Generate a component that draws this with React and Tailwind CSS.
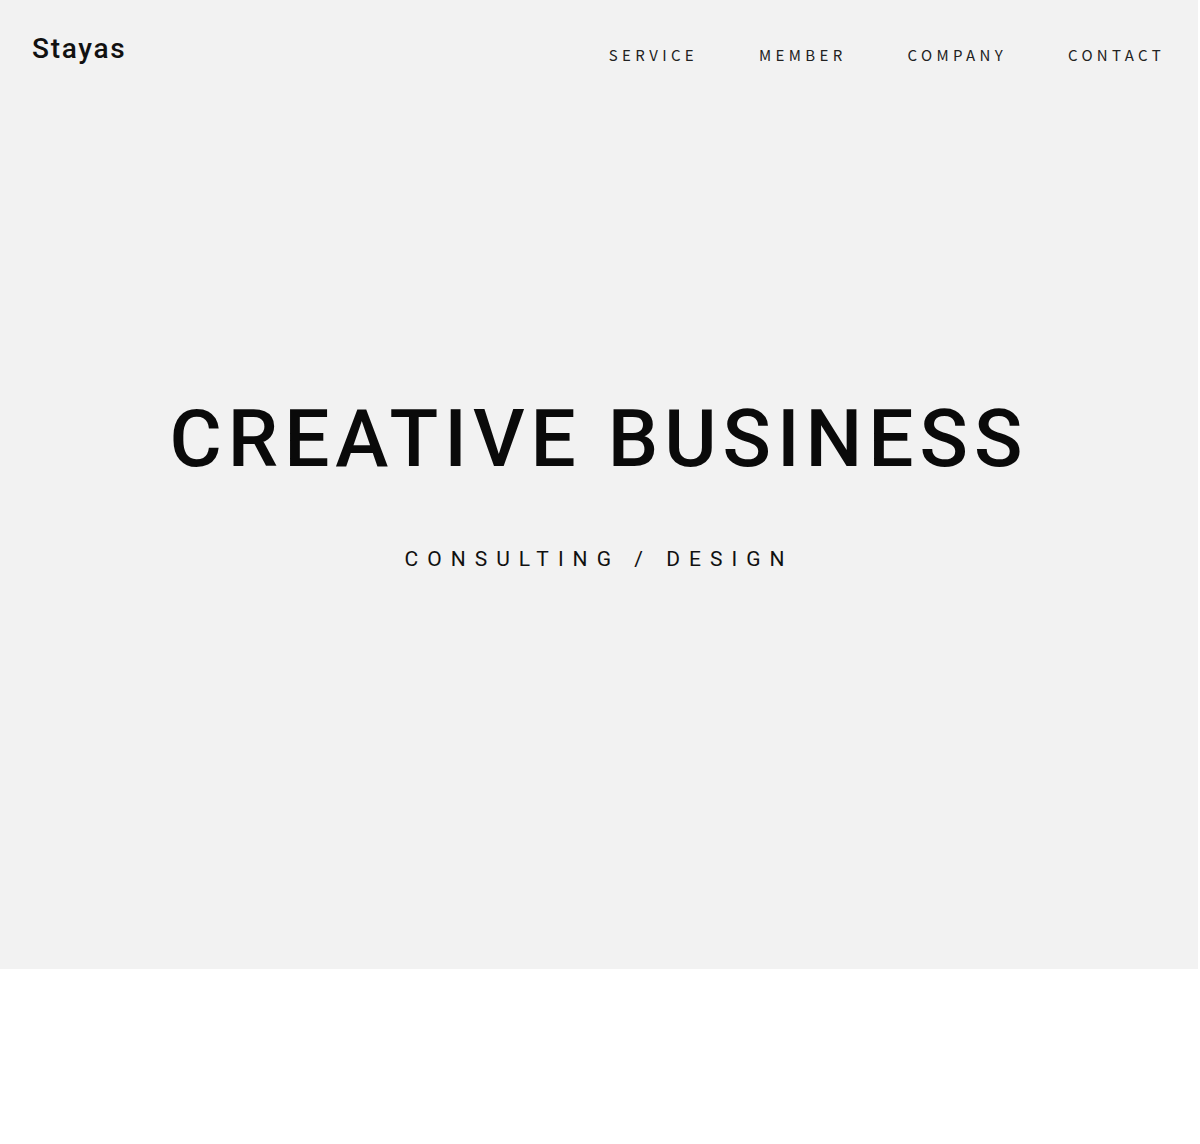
import React from 'react'

const nav = ['SERVICE', 'MEMBER', 'COMPANY', 'CONTACT']

export default function App() {
  return (
    <div className="min-h-[1144px] bg-white">
      <section className="h-[969px] w-[1198px] bg-[#f2f2f2] flex flex-col">
        <header className="flex items-start justify-between pl-8 pr-[33px] pt-[31px]">
          <h1 className="text-[28px] leading-9 font-medium tracking-[0.06em] text-[#111]" style={{ fontFamily: 'Roboto, sans-serif' }}>Stayas</h1>
          <nav className="flex gap-[61px] pt-[14px]">
            {nav.map(n => (
              <a key={n} className="text-[15px] leading-5 tracking-[0.29em] text-[#222]" style={{ fontFamily: '"Noto Sans CJK JP", "Noto Sans", sans-serif' }}>{n}</a>
            ))}
          </nav>
        </header>

        <div className="flex flex-col items-center pt-[332px]" style={{ fontFamily: 'Roboto, sans-serif' }}>
          <h2 className="text-[80px] leading-none font-medium tracking-[0.075em] text-[#0a0a0a]">CREATIVE BUSINESS</h2>
          <p className="mt-[66px] text-[21px] leading-7 tracking-[0.43em] text-[#111]">CONSULTING / DESIGN</p>
        </div>
      </section>
    </div>
  )
}
